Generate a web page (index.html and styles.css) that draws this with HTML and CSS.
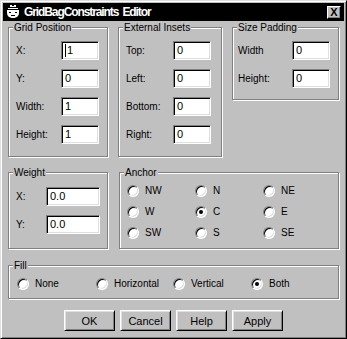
FILE: index.html
```html
<!DOCTYPE html>
<html lang="en">
<head>
    <meta charset="UTF-8">
    <title>GridBagConstraints Editor</title>
    <link rel="stylesheet" href="styles.css">
</head>
<body>
    <div class="window">
        <div class="titlebar">
            <svg class="app-icon" width="16" height="16" viewBox="0 0 16 16">
                <rect x="0" y="0" width="16" height="16" fill="#000"/>
                <path d="M5 1h6v2H5z M3 4h10v1H3z" fill="#fff"/>
                <path d="M2 6h12v3a5 5 0 0 1-5 5H7a5 5 0 0 1-5-5z" fill="#fff"/>
                <path d="M4 8h2v1H4z M10 8h2v1h-2z M6 11h4v1H6z" fill="#000"/>
                <path d="M7 1h2v1H7z" fill="#000"/>
            </svg>
            <span class="title">GridBagConstraints Editor</span>
            <button class="close-btn">X</button>
        </div>

        <div class="content">
            <div class="row-top">
                <div class="group grid-pos">
                    <span class="group-title">Grid Position</span>
                    <div class="field-row"><span class="lbl">X:</span><div class="field"><span class="caret"></span>1</div></div>
                    <div class="field-row"><span class="lbl">Y:</span><div class="field">0</div></div>
                    <div class="field-row"><span class="lbl">Width:</span><div class="field">1</div></div>
                    <div class="field-row"><span class="lbl">Height:</span><div class="field">1</div></div>
                </div>
                <div class="group insets">
                    <span class="group-title">External Insets</span>
                    <div class="field-row"><span class="lbl">Top:</span><div class="field">0</div></div>
                    <div class="field-row"><span class="lbl">Left:</span><div class="field">0</div></div>
                    <div class="field-row"><span class="lbl">Bottom:</span><div class="field">0</div></div>
                    <div class="field-row"><span class="lbl">Right:</span><div class="field">0</div></div>
                </div>
                <div class="group padding">
                    <span class="group-title">Size Padding</span>
                    <div class="field-row"><span class="lbl">Width</span><div class="field">0</div></div>
                    <div class="field-row"><span class="lbl">Height:</span><div class="field">0</div></div>
                </div>
            </div>

            <div class="row-mid">
                <div class="group weight">
                    <span class="group-title">Weight</span>
                    <div class="field-row"><span class="lbl">X:</span><div class="field wide">0.0</div></div>
                    <div class="field-row"><span class="lbl">Y:</span><div class="field wide">0.0</div></div>
                </div>
                <div class="group anchor">
                    <span class="group-title">Anchor</span>
                    <div class="radio-grid">
                        <label class="radio"><span class="circle"></span>NW</label>
                        <label class="radio"><span class="circle"></span>N</label>
                        <label class="radio"><span class="circle"></span>NE</label>
                        <label class="radio"><span class="circle"></span>W</label>
                        <label class="radio"><span class="circle checked"></span>C</label>
                        <label class="radio"><span class="circle"></span>E</label>
                        <label class="radio"><span class="circle"></span>SW</label>
                        <label class="radio"><span class="circle"></span>S</label>
                        <label class="radio"><span class="circle"></span>SE</label>
                    </div>
                </div>
            </div>

            <div class="group fill">
                <span class="group-title">Fill</span>
                <div class="radio-line">
                    <label class="radio"><span class="circle"></span>None</label>
                    <label class="radio"><span class="circle"></span>Horizontal</label>
                    <label class="radio"><span class="circle"></span>Vertical</label>
                    <label class="radio"><span class="circle checked"></span>Both</label>
                </div>
            </div>

            <div class="buttons">
                <button class="btn">OK</button>
                <button class="btn">Cancel</button>
                <button class="btn">Help</button>
                <button class="btn">Apply</button>
            </div>
        </div>
    </div>
</body>
</html>
```

FILE: styles.css
```css
body {
    margin: 0;
    font-family: "Liberation Sans", Arial, sans-serif;
    font-size: 10px;
    color: #000;
    background-color: #c0c0c0;
}
.window {
    width: 347px;
    height: 339px;
    box-sizing: border-box;
    padding: 2px;
    border: 1px solid;
    border-color: #dfdfdf #000 #000 #dfdfdf;
    box-shadow: inset 1px 1px 0 #fff, inset -1px -1px 0 #808080;
    background-color: #c0c0c0;
}
.titlebar {
    height: 18px;
    background-color: #000;
    color: #fff;
    display: flex;
    align-items: center;
}
.app-icon {
    margin: 0 3px 0 2px;
}
.title {
    font-weight: bold;
    font-size: 12px;
    letter-spacing: -1.1px;
    word-spacing: 2px;
    flex: 1;
}
.close-btn {
    width: 14px;
    height: 13px;
    margin-right: 3px;
    padding: 0;
    font-family: "Liberation Sans", Arial, sans-serif;
    font-size: 11px;
    font-weight: bold;
    line-height: 9px;
    background-color: #c0c0c0;
    border: 1px solid;
    border-color: #fff #000 #000 #fff;
    box-shadow: inset -1px -1px 0 #808080;
}
.content {
    padding: 6px 0 0 5px;
}
.group {
    box-sizing: border-box;
    display: flex;
    flex-direction: column;
    border: 1px solid #808080;
    box-shadow: inset 1px 1px 0 #fff, 1px 1px 0 #fff;
}
.group-title {
    align-self: flex-start;
    height: 13px;
    line-height: 13px;
    margin: -7px 0 0 -3px;
    padding: 0 1px;
    background-color: #c0c0c0;
}
.row-top {
    display: flex;
    align-items: flex-start;
    gap: 10px;
}
.grid-pos {
    width: 100px;
    height: 130px;
    padding-left: 7px;
}
.insets {
    width: 104px;
    height: 130px;
    padding-left: 7px;
}
.padding {
    width: 107px;
    height: 73px;
    padding-left: 5px;
}
.padding .group-title {
    margin-left: -1px;
}
.field-row {
    display: flex;
    align-items: center;
    margin-top: 9px;
}
.group-title + .field-row {
    margin-top: 7px;
}
.lbl {
    width: 45px;
}
.insets .lbl {
    width: 47px;
}
.padding .lbl {
    width: 54px;
}
.weight .lbl {
    width: 30px;
}
.field {
    box-sizing: border-box;
    width: 38px;
    height: 19px;
    padding-left: 3px;
    font-size: 11px;
    line-height: 15px;
    background-color: #fff;
    border: 1px solid;
    border-color: #808080 #fff #fff #808080;
    box-shadow: inset 1px 1px 0 #000, inset -1px -1px 0 #dfdfdf;
    display: flex;
    align-items: center;
}
.field.wide {
    width: 54px;
}
.caret {
    width: 1px;
    height: 13px;
    background-color: #000;
    margin-right: 1px;
}
.row-mid {
    display: flex;
    gap: 11px;
    height: 77px;
    margin-top: 15px;
}
.weight {
    width: 100px;
    padding-left: 7px;
}
.weight .group-title + .field-row {
    margin-top: 8px;
}
.anchor {
    width: 220px;
    padding-left: 7px;
}
.radio-grid {
    display: grid;
    grid-template-columns: repeat(3, 68px);
    grid-auto-rows: 21px;
    margin-top: 1px;
}
.radio {
    display: flex;
    align-items: center;
}
.circle {
    box-sizing: border-box;
    width: 12px;
    height: 12px;
    margin-right: 6px;
    border-radius: 50%;
    background-color: #fff;
    border: 1px solid;
    border-color: #808080 #fff #fff #808080;
    box-shadow: inset 1px 1px 0 #000, inset -1px -1px 0 #dfdfdf;
    display: flex;
    align-items: center;
    justify-content: center;
}
.circle.checked::after {
    content: "";
    width: 4px;
    height: 4px;
    border-radius: 50%;
    background-color: #000;
}
.fill {
    width: 331px;
    height: 34px;
    margin-top: 16px;
    padding-left: 8px;
}
.fill .group-title {
    margin-left: -4px;
}
.radio-line {
    display: grid;
    grid-template-columns: 79px 77px 78px 70px;
    height: 21px;
    margin-top: 1px;
}
.buttons {
    display: flex;
    justify-content: center;
    gap: 5px;
    margin: 11px 0 0 -5px;
}
.btn {
    width: 51px;
    height: 21px;
    padding: 0;
    font-family: "Liberation Sans", Arial, sans-serif;
    font-size: 11px;
    color: #000;
    background-color: #c0c0c0;
    border: 1px solid;
    border-color: #fff #000 #000 #fff;
    box-shadow: inset 1px 1px 0 #dfdfdf, inset -1px -1px 0 #808080;
}
```
